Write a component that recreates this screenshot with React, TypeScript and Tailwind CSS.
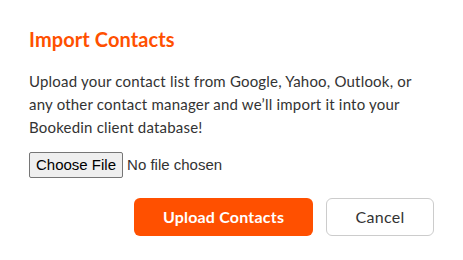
import React from "react";

const App: React.FC = () => {
  return (
    <div className="w-[463px] h-[260px] bg-white rounded-md font-['Lato','Open_Sans',sans-serif] text-[#333]">
      <div className="px-[29px] pt-[27px]">
        <h2 className="text-[20px] font-bold text-[#ff5000] leading-[24px] tracking-[0.1px]">Import Contacts</h2>
        <p className="mt-[19px] text-[15px] leading-[23px] tracking-[0.2px]">
          Upload your contact list from Google, Yahoo, Outlook, or any other contact manager and we’ll import it
          into your Bookedin client database!
        </p>
        <div className="mt-[15px] flex items-center h-[22px]">
          <input type="file" className="text-[15px] font-['Liberation_Sans',Arial,sans-serif] file:mr-1 file:px-[6px] file:py-[1px] file:border file:border-[#767676] file:bg-[#efefef] file:rounded-[2px] file:text-[#000]" />
        </div>
        <div className="mt-[22px] flex justify-end gap-[13px]">
          <button className="w-[179px] h-[38px] rounded-md bg-[#ff5000] text-white font-bold text-[16px] tracking-[0.2px]">
            Upload Contacts
          </button>
          <button className="w-[108px] h-[38px] rounded-md border border-[#ccc] bg-white text-[#333] text-[16px] tracking-[0.3px]">
            Cancel
          </button>
        </div>
      </div>
    </div>
  );
};

export default App;
